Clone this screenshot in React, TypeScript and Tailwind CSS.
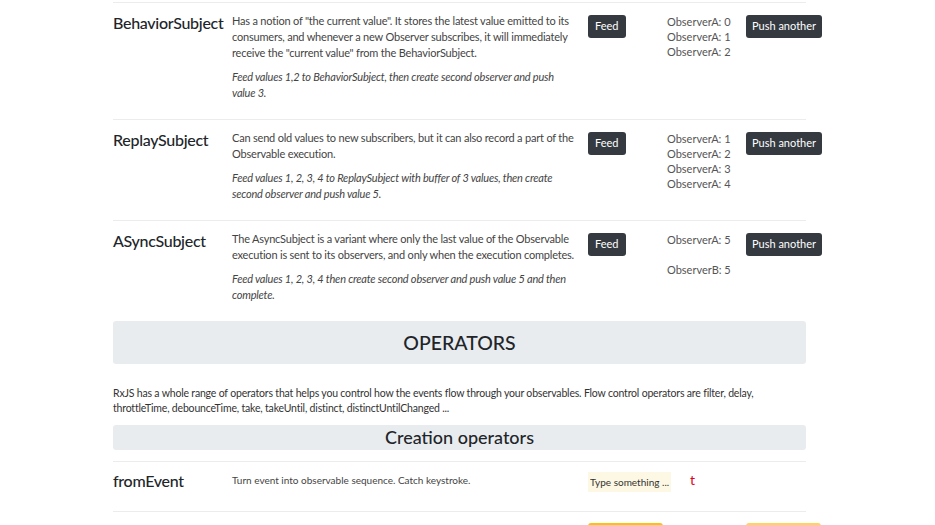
const font = { fontFamily: 'Lato, "Noto Sans", sans-serif' };

interface SubjectRow {
  name: string;
  text: string;
  example: string;
  observers: string[];
}

const subjects: SubjectRow[] = [
  {
    name: "BehaviorSubject",
    text: 'Has a notion of "the current value". It stores the latest value emitted to its consumers, and whenever a new Observer subscribes, it will immediately receive the "current value" from the BehaviorSubject.',
    example: "Feed values 1,2 to BehaviorSubject, then create second observer and push value 3.",
    observers: ["ObserverA: 0", "ObserverA: 1", "ObserverA: 2"],
  },
  {
    name: "ReplaySubject",
    text: "Can send old values to new subscribers, but it can also record a part of the Observable execution.",
    example: "Feed values 1, 2, 3, 4 to ReplaySubject with buffer of 3 values, then create second observer and push value 5.",
    observers: ["ObserverA: 1", "ObserverA: 2", "ObserverA: 3", "ObserverA: 4"],
  },
  {
    name: "ASyncSubject",
    text: "The AsyncSubject is a variant where only the last value of the Observable execution is sent to its observers, and only when the execution completes.",
    example: "Feed values 1, 2, 3, 4 then create second observer and push value 5 and then complete.",
    observers: ["ObserverA: 5", "", "ObserverB: 5"],
  },
];

const cols = "grid grid-cols-[119px_356px_79px_79px_79px]";

function Row({ row }: { row: SubjectRow }) {
  return (
    <div className={`${cols} border-t border-[#ececec] pt-[10px]`}>
      <h4 className="text-[16px] leading-[22px] font-medium tracking-[-0.3px] text-[#212529] mt-[-1px]">{row.name}</h4>
      <div className="pr-[13px] text-[11px] leading-[16px] tracking-[-0.2px] text-[#444]">
        <p className="mb-[8px]">{row.text}</p>
        <p className="mb-[18px] italic">{row.example}</p>
      </div>
      <div className="mt-[-1px]">
        <button className="h-[23px] px-[7px] rounded-[3px] bg-[#343a40] text-white text-[11px]">Feed</button>
      </div>
      <div className="text-[11px] leading-[15px] text-[#555] pt-[1px]">
        {row.observers.map((o, i) => (
          <div key={i} className="h-[15px]">{o}</div>
        ))}
      </div>
      <div className="mt-[-1px]">
        <button className="h-[23px] px-[6px] rounded-[3px] bg-[#343a40] text-white text-[11px] whitespace-nowrap">Push another</button>
      </div>
    </div>
  );
}

export default function App() {
  return (
    <div className="h-[525px] bg-white overflow-hidden" style={font}>
      <div className="ml-[113px] w-[693px] pt-[2px]">
        {subjects.map((s) => (
          <Row key={s.name} row={s} />
        ))}

        <div className="h-[43px] rounded-[3px] bg-[#e9ecef] flex items-center justify-center">
          <h2 className="text-[19.5px] font-medium text-[#212529]">OPERATORS</h2>
        </div>

        <p className="mt-[22px] text-[10.5px] leading-[15px] tracking-[-0.18px] text-[#333]">
          RxJS has a whole range of operators that helps you control how the events flow through your observables. Flow control operators are filter, delay, throttleTime, debounceTime, take, takeUntil, distinct, distinctUntilChanged ...
        </p>

        <div className="mt-[9px] h-[25px] rounded-[3px] bg-[#e9ecef] flex items-center justify-center">
          <h3 className="text-[18px] font-medium text-[#212529]">Creation operators</h3>
        </div>

        <div className={`${cols} mt-[11px] border-t border-[#ececec] pt-[10px] h-[50px]`}>
          <h4 className="text-[16px] leading-[22px] font-medium tracking-[-0.3px] text-[#212529] mt-[-2px]">fromEvent</h4>
          <div className="text-[10px] leading-[15px] text-[#444] pt-[1px]">Turn event into observable sequence. Catch keystroke.</div>
          <div className="col-span-2 flex items-center gap-[19px] h-[20px]">
            <input
              className="w-[83px] h-[20px] bg-[#fcf8e3] px-[2px] text-[10px] text-[#333] placeholder:text-[#333] outline-none"
              placeholder="Type something ..."
            />
            <span className="text-[14px] text-[#e0001b] mt-[-5px]">t</span>
          </div>
        </div>

        <div className={`${cols} border-t border-[#ececec] pt-[8px]`}>
          <div />
          <div />
          <div>
            <button className="h-[23px] w-[75px] rounded-[3px] bg-[#ffc107] text-[#212529] text-[11px]">Start</button>
          </div>
          <div />
          <div>
            <button className="h-[23px] w-[75px] rounded-[3px] bg-[#ffd556] text-[#212529] text-[11px]">Stop</button>
          </div>
        </div>
      </div>
    </div>
  );
}
